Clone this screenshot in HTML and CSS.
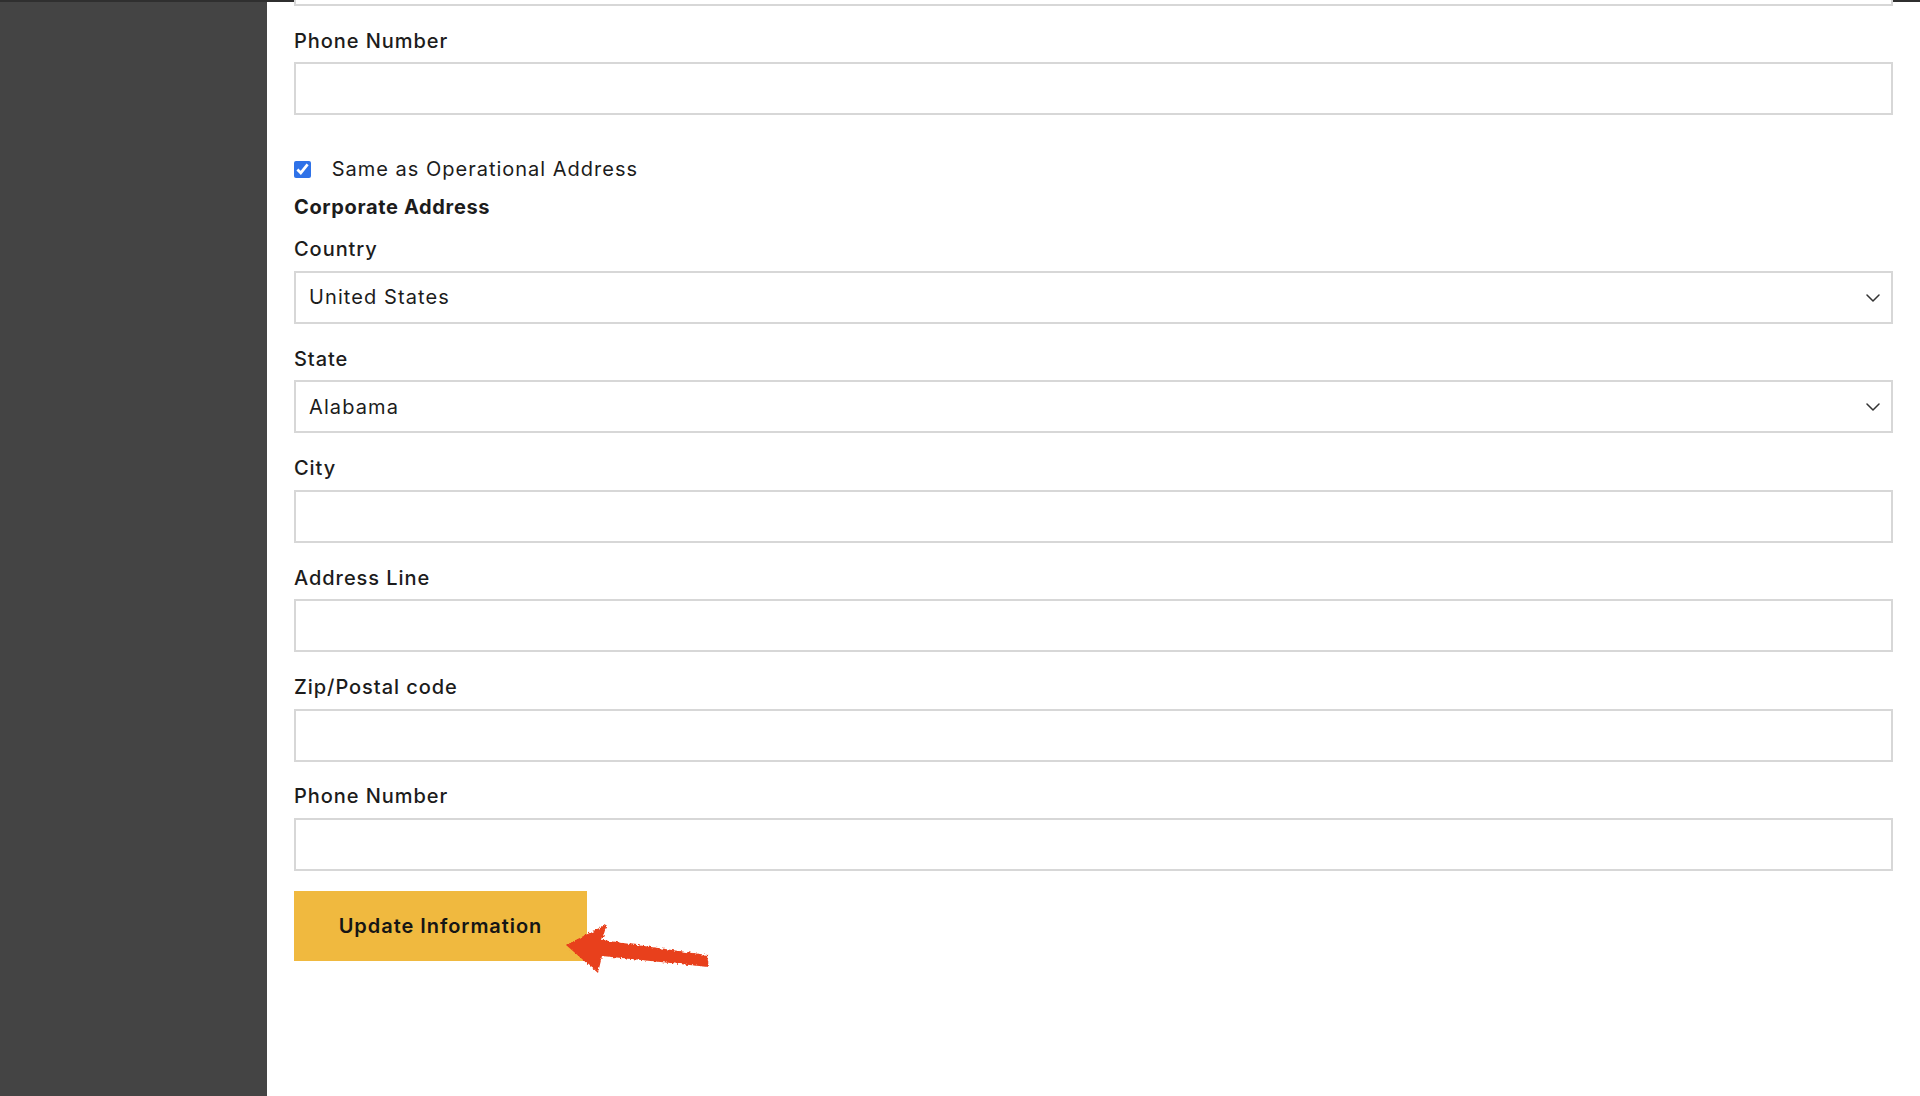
FILE: index.html
```html
<!DOCTYPE html>
<html lang="en">
<head>
<meta charset="utf-8">
<title>Update Information</title>
<link rel="stylesheet" href="styles.css">
</head>
<body>
<div class="app">
  <aside class="sidebar"></aside>
  <main class="content">
    <form class="form">
      <div class="field field--cut"><input class="input" type="text"></div>
      <div class="field">
        <label class="label">Phone Number</label>
        <input class="input" type="text">
      </div>
      <label class="check-row">
        <input class="check" type="checkbox" checked>
        <span class="check-text">Same as Operational Address</span>
      </label>
      <h3 class="section-title">Corporate Address</h3>
      <div class="field">
        <label class="label">Country</label>
        <div class="select-wrap">
          <select class="input select"><option>United States</option></select>
          <svg class="chevron" width="14" height="8" viewBox="0 0 14 8"><path d="M1 1 L7 7 L13 1" fill="none" stroke="#333" stroke-width="1.5" stroke-linecap="round" stroke-linejoin="round"/></svg>
        </div>
      </div>
      <div class="field">
        <label class="label">State</label>
        <div class="select-wrap">
          <select class="input select"><option>Alabama</option></select>
          <svg class="chevron" width="14" height="8" viewBox="0 0 14 8"><path d="M1 1 L7 7 L13 1" fill="none" stroke="#333" stroke-width="1.5" stroke-linecap="round" stroke-linejoin="round"/></svg>
        </div>
      </div>
      <div class="field">
        <label class="label">City</label>
        <input class="input" type="text">
      </div>
      <div class="field">
        <label class="label">Address Line</label>
        <input class="input" type="text">
      </div>
      <div class="field">
        <label class="label">Zip/Postal code</label>
        <input class="input" type="text">
      </div>
      <div class="field field--last">
        <label class="label">Phone Number</label>
        <input class="input" type="text">
      </div>
      <div class="actions">
        <button class="btn" type="button">Update Information</button>
        <svg class="arrow" width="160" height="80" viewBox="0 0 160 80">
          <defs>
            <filter id="rough" x="-10%" y="-10%" width="120%" height="120%">
              <feTurbulence type="fractalNoise" baseFrequency="0.35" numOctaves="2" seed="3" result="n"/>
              <feDisplacementMap in="SourceGraphic" in2="n" scale="4" xChannelSelector="R" yChannelSelector="G"/>
            </filter>
          </defs>
          <g filter="url(#rough)" fill="#e8411d">
            <path d="M6 45 L47 24 L42 40 L147 55 L149 67 L42 56 L38 73 Z"/>
          </g>
        </svg>
      </div>
    </form>
  </main>
</div>
</body>
</html>
```
FILE: styles.css
```css
* { box-sizing: border-box; }
html, body { margin: 0; padding: 0; height: 100%; overflow: hidden; }
body {
  font-family: Inter, "Open Sans", "Liberation Sans", sans-serif;
  color: #1c1c1c;
  background: #fff;
  letter-spacing: 0.95px;
}
.app {
  display: flex;
  height: 1096px;
  border-top: 2px solid #2f2f2f;
}
.sidebar {
  width: 267px;
  flex: 0 0 267px;
  background: #444444;
}
.content {
  flex: 1;
  padding: 0 27px;
}
.form { display: flex; flex-direction: column; }
.field { margin-bottom: 22.8px; }
.field--cut .input { margin-top: -49px; display: block; }
.label {
  display: block;
  font-size: 20px;
  font-weight: 500;
  line-height: 24px;
  margin-bottom: 9.6px;
}
.input {
  display: block;
  width: 100%;
  height: 53px;
  border: 2px solid #d7d7d7;
  border-radius: 0;
  background: #fff;
  font: 400 20px Inter, "Open Sans", sans-serif;
  letter-spacing: 1.1px;
  color: #1c1c1c;
  padding: 0 13px;
  outline: none;
}
.select { appearance: none; -webkit-appearance: none; }
.select-wrap { position: relative; }
.chevron { position: absolute; right: 13px; top: 23px; pointer-events: none; }
.check-row {
  display: flex;
  align-items: center;
  height: 24px;
  margin-top: 19.2px;
  margin-bottom: 13.3px;
  font-size: 20px;
  line-height: 24px;
  letter-spacing: 1px;
}
.check {
  width: 17px;
  height: 17px;
  margin: 0 20.7px 0 0;
  accent-color: #2f72e8;
}
.section-title {
  margin: 0 0 18.7px;
  font-size: 20px;
  font-weight: 700;
  line-height: 24px;
  letter-spacing: 0.65px;
}
.field--last { margin-bottom: 20.4px; }
.actions { position: relative; }
.btn {
  width: 293px;
  height: 70px;
  border: 0;
  border-radius: 0;
  background: #f0b93f;
  color: #151515;
  font: 600 20px Inter, "Open Sans", sans-serif;
  letter-spacing: 0.95px;
  cursor: pointer;
}
.arrow { position: absolute; left: 266px; top: 9px; }
```
